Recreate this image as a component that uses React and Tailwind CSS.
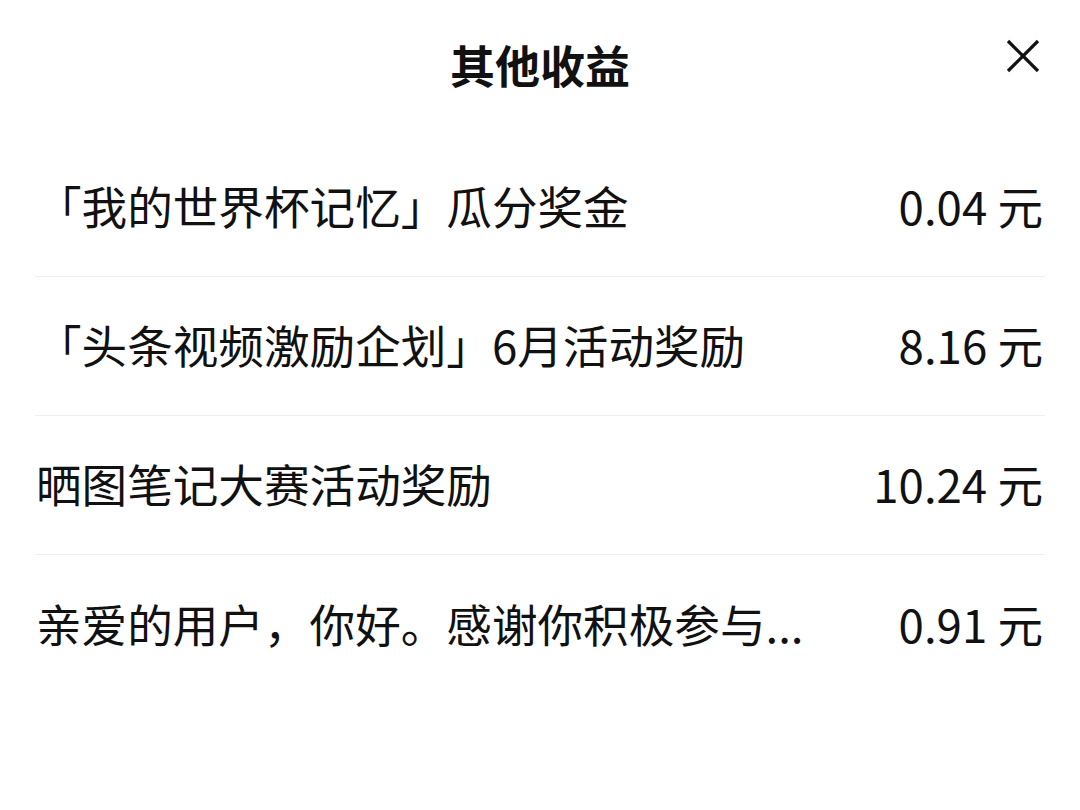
import React from 'react';

const rows = [
  { title: '「我的世界杯记忆」瓜分奖金', amount: '0.04' },
  { title: '「头条视频激励企划」6月活动奖励', amount: '8.16' },
  { title: '晒图笔记大赛活动奖励', amount: '10.24' },
  { title: '亲爱的用户，你好。感谢你积极参与...', amount: '0.91' },
];

export default function App() {
  return (
    <div
      className="w-[1080px] h-[810px] bg-white text-[#111111] overflow-hidden"
      style={{ fontFamily: '"Noto Sans CJK SC", "Noto Sans", sans-serif' }}
    >
      {/* Header */}
      <div className="relative h-[138px] flex items-center justify-center pb-[8px]">
        <h1 className="text-[45px] font-bold leading-tight">其他收益</h1>
        <button className="absolute right-[38px] top-[37px] w-[38px] h-[38px] flex items-center justify-center">
          <svg width="36" height="36" viewBox="0 0 36 36" fill="none" stroke="#111" strokeWidth="3.2">
            <line x1="3" y1="3" x2="33" y2="33" />
            <line x1="33" y1="3" x2="3" y2="33" />
          </svg>
        </button>
      </div>

      {/* List */}
      <div className="px-[35px]">
        {rows.map((r, i) => (
          <div
            key={i}
            className={`h-[139px] flex items-center justify-between pb-[3px] ${i < rows.length - 1 ? 'border-b border-[#efefef]' : ''}`}
          >
            <div className="whitespace-nowrap text-[45.6px] leading-normal pl-[1px]">{r.title}</div>
            <div className="text-[45.6px] leading-normal whitespace-nowrap pr-[2px]">
              {r.amount} 元
            </div>
          </div>
        ))}
      </div>
    </div>
  );
}
